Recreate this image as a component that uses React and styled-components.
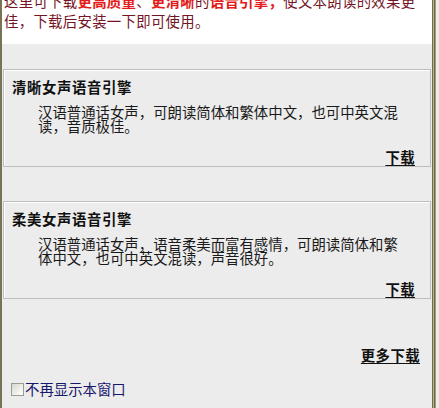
import React from "react";
import styled, { createGlobalStyle } from "styled-components";

const GlobalStyle = createGlobalStyle`
  html, body {
    margin: 0;
    padding: 0;
    background: #ecebe4;
  }
  body {
    font-family: "Noto Sans CJK SC", "Noto Sans", sans-serif;
  }
`;

const Window = styled.div`
  box-sizing: border-box;
  width: 433px;
  height: 408px;
  background: #ececec;
  border-left: 2px solid #767357;
  border-right: 1px solid #6f6b4e;
  box-shadow: 1px 0 0 #b7b496, 2px 0 0 #6a6649, 3px 0 0 #a3a07f;
  display: flex;
  flex-direction: column;
`;

const Header = styled.div`
  box-sizing: border-box;
  height: 44px;
  background: #ffffff;
  overflow: hidden;
  padding: 0 7px 0 2px;
  flex-shrink: 0;
`;

const Intro = styled.p`
  margin: -9px 0 0 0;
  font-size: 14.4px;
  line-height: 20px;
  letter-spacing: 0.3px;
  color: #731526;
`;

const Hot = styled.strong`
  color: #e31a1a;
  font-weight: bold;
`;

const Body = styled.div`
  display: flex;
  flex-direction: column;
  padding: 25px 1px 0 1px;
`;

const Card = styled.section`
  box-sizing: border-box;
  height: 98px;
  margin-top: ${(p) => (p.$first ? "0" : "34px")};
  border: 1px solid #bdbdbd;
  box-shadow: inset 1px 1px 0 #ffffff;
  background: #ececec;
  padding: 9px 15px 1px 8px;
  display: flex;
  flex-direction: column;
`;

const Title = styled.h3`
  margin: 0;
  font-size: 14.4px;
  line-height: 16px;
  font-weight: bold;
  letter-spacing: 0.6px;
  color: #111;
`;

const Desc = styled.p`
  margin: 10px 10px 0 26px;
  font-size: 14.4px;
  line-height: 14px;
  color: #1a1a1a;
`;

const LinkRow = styled.div`
  margin-top: ${(p) => p.$top}px;
  padding-right: ${(p) => p.$pad || 0}px;
  display: flex;
  justify-content: flex-end;
  line-height: 16px;
`;

const DownLink = styled.a`
  font-size: 14.4px;
  font-weight: bold;
  color: #111;
  text-decoration: underline;
  text-underline-offset: 2px;
  letter-spacing: 0.4px;
  cursor: pointer;
`;

const CheckRow = styled.label`
  margin-top: 18px;
  padding-left: 8px;
  display: flex;
  align-items: center;
  height: 16px;
  font-size: 14.4px;
  line-height: 16px;
  color: #17176c;
  cursor: pointer;
`;

const Check = styled.input`
  appearance: none;
  -webkit-appearance: none;
  box-sizing: border-box;
  width: 13px;
  height: 13px;
  margin: 0 1px 0 0;
  border: 1px solid #9a9a96;
  background: linear-gradient(135deg, #d8d8d2 0%, #f4f4f0 70%, #ffffff 100%);
`;

const engines = [
  {
    title: "清晰女声语音引擎",
    desc: "汉语普通话女声，可朗读简体和繁体中文，也可中英文混读，音质极佳。",
  },
  {
    title: "柔美女声语音引擎",
    desc: "汉语普通话女声，语音柔美而富有感情，可朗读简体和繁体中文，也可中英文混读，声音很好。",
  },
];

export default function App() {
  return (
    <>
      <GlobalStyle />
      <Window>
        <Header>
          <Intro>
            这里可下载<Hot>更高质量</Hot>、<Hot>更清晰</Hot>的<Hot>语音引擎，</Hot>使文本朗读的效果更佳，下载后安装一下即可使用。
          </Intro>
        </Header>
        <Body>
          {engines.map((e, i) => (
            <Card key={e.title} $first={i === 0}>
              <Title>{e.title}</Title>
              <Desc>{e.desc}</Desc>
              <LinkRow $top={16}>
                <DownLink>下载</DownLink>
              </LinkRow>
            </Card>
          ))}
          <LinkRow $top={48} $pad={11}>
            <DownLink>更多下载</DownLink>
          </LinkRow>
          <CheckRow>
            <Check type="checkbox" />
            不再显示本窗口
          </CheckRow>
        </Body>
      </Window>
    </>
  );
}
